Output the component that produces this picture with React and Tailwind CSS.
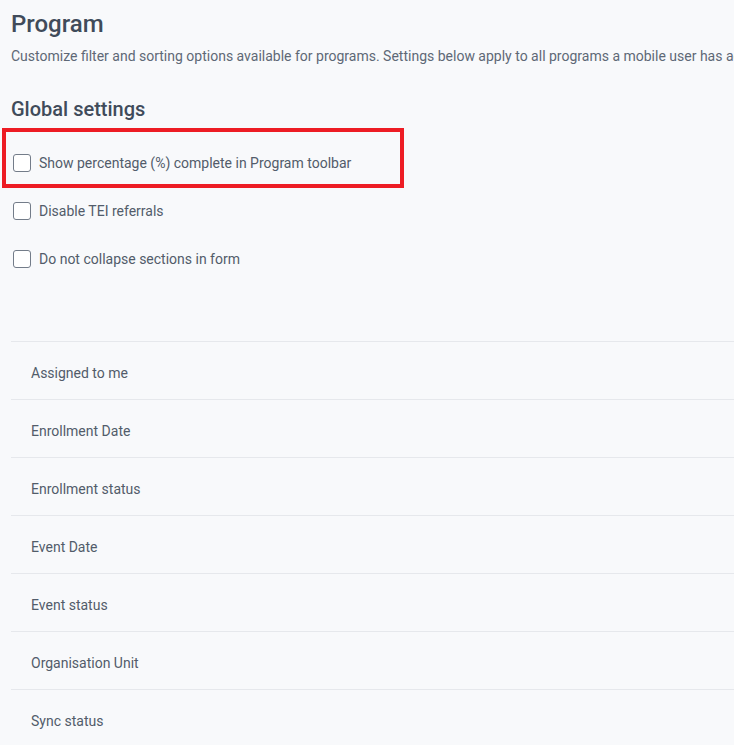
import React from "react";

const checks = [
  "Disable TEI referrals",
  "Do not collapse sections in form",
];

const rows = [
  "Assigned to me",
  "Enrollment Date",
  "Enrollment status",
  "Event Date",
  "Event status",
  "Organisation Unit",
  "Sync status",
];

function Check({ label }) {
  return (
    <label className="flex items-center gap-[8px] h-[48px] pl-[2px]">
      <span className="w-[18px] h-[18px] rounded-[3px] border-[1.5px] border-[#737c89] bg-white shrink-0" />
      <span className="text-[14px] text-[#525c6a]">{label}</span>
    </label>
  );
}

export default function App() {
  return (
    <div
      className="min-h-[745px] w-[734px] overflow-hidden bg-[#f8f9fb] pl-[11px]"
      style={{ fontFamily: "Roboto, 'Liberation Sans', sans-serif" }}
    >
      <h1 className="pt-[8px] text-[24px] leading-[32px] font-medium text-[#404b5a]">Program</h1>
      <p className="mt-[6px] text-[14px] leading-[20px] text-[#5e6876] whitespace-nowrap">
        Customize filter and sorting options available for programs. Settings below apply to all programs a mobile user has access to.
      </p>
      <h2 className="mt-[29px] text-[20px] leading-[28px] font-medium text-[#404b5a]">Global settings</h2>
      <div className="mt-[5px] -ml-[9px] w-[402px] h-[60px] border-[4px] border-[#ed1c24] pl-[7px] pt-[10px] flex items-center">
        <label className="flex items-center gap-[8px]">
          <span className="w-[18px] h-[18px] rounded-[3px] border-[1.5px] border-[#737c89] bg-white shrink-0" />
          <span className="text-[14px] text-[#525c6a]">Show percentage (%) complete in Program toolbar</span>
        </label>
      </div>
      <div className="-mt-[1px] flex flex-col">
        {checks.map((c) => (
          <Check key={c} label={c} />
        ))}
      </div>
      <div className="mt-[58px] border-t border-[#e6e8ec]">
        {rows.map((r) => (
          <div key={r} className="h-[58px] border-b border-[#e6e8ec] pl-[20px] pt-[6px] flex items-center text-[14px] text-[#525c6a]">
            {r}
          </div>
        ))}
      </div>
    </div>
  );
}
